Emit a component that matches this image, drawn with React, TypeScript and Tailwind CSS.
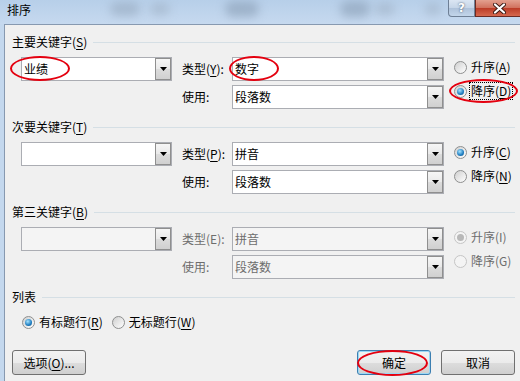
import type { ReactNode } from 'react';

const FONT = "font-['Noto_Sans_CJK_SC','Noto_Sans',sans-serif]";

function Key({ k, line = true }: { k: string; line?: boolean }): ReactNode {
  return (
    <>
      (<span className={line ? 'underline underline-offset-[2px] decoration-1' : ''}>{k}</span>)
    </>
  );
}

function Header({ children }: { children: ReactNode }): ReactNode {
  return (
    <div className="flex h-[16px] items-center">
      <span className="leading-[16px]">{children}</span>
      <div className="ml-[6px] h-px flex-1 bg-[#d5dfe5]" />
    </div>
  );
}

function Combo({ value, w, disabled }: { value: string; w: string; disabled?: boolean }): ReactNode {
  return (
    <div
      className={`flex h-[24px] ${w} border border-[#abadb3] ${
        disabled ? 'bg-[#f4f4f4] text-[#6d6d6d]' : 'bg-white text-black'
      }`}
    >
      <div className="flex-1 pl-[2px] leading-[22px]">{value}</div>
      <div className="flex w-[16px] items-center justify-center border border-[#8f8f8f] bg-[linear-gradient(180deg,#f6f6f6_0%,#e9e9e9_50%,#dcdcdc_51%,#d0d0d0_100%)]">
        <svg width="7" height="4" viewBox="0 0 7 4">
          <path d="M0 0h7L3.5 4z" fill="#000" />
        </svg>
      </div>
    </div>
  );
}

function Radio({
  checked,
  disabled,
  focus,
  children,
}: {
  checked?: boolean;
  disabled?: boolean;
  focus?: boolean;
  children: ReactNode;
}): ReactNode {
  return (
    <div className="flex h-[14px] items-center gap-[3px]">
      <span
        className={`flex h-[13px] w-[13px] items-center justify-center rounded-full border ${
          disabled
            ? 'border-[#c5c5c5] bg-[#f4f4f4]'
            : 'border-[#8e8f8f] bg-[linear-gradient(135deg,#cfcfcf,#ffffff)]'
        }`}
      >
        {checked && (
          <span
            className={`h-[7px] w-[7px] rounded-full ${
              disabled
                ? 'bg-[#b8b8b8]'
                : 'bg-[radial-gradient(circle_at_40%_35%,#a6e4ff,#1d7cc0_60%,#0b4f82)]'
            }`}
          />
        )}
      </span>
      <span
        className={`px-[1px] leading-[16px] ${disabled ? 'text-[#6d6d6d]' : ''} ${
          focus ? 'outline-1 outline-dotted outline-black' : ''
        }`}
      >
        {children}
      </span>
    </div>
  );
}

function KeySection({
  title,
  first,
  typeLabel,
  typeValue,
  up,
  down,
  upChecked,
  disabled,
  focusDown,
}: {
  title: ReactNode;
  first: string;
  typeLabel: ReactNode;
  typeValue: string;
  up: ReactNode;
  down: ReactNode;
  upChecked: boolean;
  disabled?: boolean;
  focusDown?: boolean;
}): ReactNode {
  const lbl = `w-[50px] leading-[24px] ${disabled ? 'text-[#6d6d6d]' : ''}`;
  return (
    <>
      <Header>{title}</Header>
      <div className="mt-[7px] flex pl-[9px]">
        <Combo w="w-[151px]" value={first} disabled={disabled} />
        <div className="ml-[10px] flex flex-col gap-[4px]">
          <div className="flex">
            <span className={lbl}>{typeLabel}</span>
            <Combo w="w-[212px]" value={typeValue} disabled={disabled} />
          </div>
          <div className="flex">
            <span className={lbl}>使用:</span>
            <Combo w="w-[212px]" value="段落数" disabled={disabled} />
          </div>
        </div>
        <div className="ml-[10px] mt-[3px] flex flex-col gap-[10px]">
          <Radio checked={upChecked} disabled={disabled}>
            {up}
          </Radio>
          <Radio checked={!upChecked} disabled={disabled} focus={focusDown}>
            {down}
          </Radio>
        </div>
      </div>
    </>
  );
}

const BTN =
  'h-[25px] w-[74px] rounded-[3px] border text-[12px] text-black bg-[linear-gradient(180deg,#f2f2f2_0%,#ebebeb_50%,#dddddd_51%,#cfcfcf_100%)]';

export default function App(): ReactNode {
  return (
    <div className={`relative flex h-[381px] w-[520px] flex-col overflow-hidden bg-[#c4d8ee] text-[12px] text-black ${FONT}`}>
      {/* title bar */}
      <div className="relative h-[24px] overflow-hidden bg-[linear-gradient(180deg,#b7cfe9_0%,#c6d9ef_100%)]">
        <div className="absolute left-[110px] top-[2px] h-[14px] w-[30px] rounded-full bg-[#8fa1b6] opacity-50 blur-[5px]" />
        <div className="absolute left-[150px] top-[3px] h-[12px] w-[20px] rounded-full bg-[#9aabbe] opacity-50 blur-[5px]" />
        <div className="absolute left-[225px] top-[1px] h-[16px] w-[34px] rounded-full bg-[#7f93aa] opacity-50 blur-[5px]" />
        <div className="absolute left-[340px] top-[1px] h-[16px] w-[30px] rounded-full bg-[#7f93aa] opacity-50 blur-[5px]" />
        <div className="absolute left-[375px] top-[3px] h-[12px] w-[20px] rounded-full bg-[#9aabbe] opacity-50 blur-[5px]" />
        <div className="absolute left-[425px] top-[3px] h-[12px] w-[16px] rounded-full bg-[#9aabbe] opacity-50 blur-[5px]" />
        <span className="absolute left-[7px] top-[2px] leading-[16px]">排序</span>
        <div className="absolute left-[448px] top-0 flex h-[17px] w-[27px] items-center justify-center rounded-bl-[4px] border border-t-0 border-[#6e7f95] bg-[linear-gradient(180deg,#dbe6f3_0%,#c5d5e8_50%,#aec2da_51%,#c2d5ea_100%)]">
          <span className="font-['DejaVu_Sans',sans-serif] text-[12px] font-bold leading-[14px] text-white [text-shadow:0_0_2px_#2c3e55]">
            ?
          </span>
        </div>
        <div className="absolute left-[475px] top-0 flex h-[17px] w-[48px] items-center justify-center border border-t-0 border-[#6b2a22] bg-[linear-gradient(180deg,#e3a08f_0%,#d0705c_50%,#bb3b26_51%,#d5684e_100%)]">
          <svg width="13" height="11" viewBox="0 0 13 11">
            <path d="M2 1.5l9 8M11 1.5l-9 8" stroke="#3a1a14" strokeWidth="4" strokeLinecap="round" />
            <path d="M2 1.5l9 8M11 1.5l-9 8" stroke="#fff" strokeWidth="2.2" strokeLinecap="round" />
          </svg>
        </div>
      </div>

      {/* client */}
      <div className="ml-[4px] flex flex-1 flex-col border-l border-t border-[#8799b0] bg-[#f0f0f0] pl-[7px] pr-[5px]">
        <div className="mt-[9px]" />
        <KeySection
          title={<>主要关键字<Key k="S" /></>}
          first="业绩"
          typeLabel={<>类型<Key k="Y" />:</>}
          typeValue="数字"
          up={<>升序<Key k="A" /></>}
          down={<>降序<Key k="D" /></>}
          upChecked={false}
          focusDown
        />
        <div className="mt-[10px]" />
        <KeySection
          title={<>次要关键字<Key k="T" /></>}
          first=""
          typeLabel={<>类型<Key k="P" />:</>}
          typeValue="拼音"
          up={<>升序<Key k="C" /></>}
          down={<>降序<Key k="N" /></>}
          upChecked
        />
        <div className="mt-[10px]" />
        <KeySection
          title={<>第三关键字<Key k="B" /></>}
          first=""
          typeLabel={<>类型<Key k="E" line={false} />:</>}
          typeValue="拼音"
          up={<>升序<Key k="I" line={false} /></>}
          down={<>降序<Key k="G" line={false} /></>}
          upChecked
          disabled
        />
        <div className="mt-[10px]">
          <Header>列表</Header>
        </div>
        <div className="mt-[10px] flex gap-[8px] pl-[10px]">
          <Radio checked>
            有标题行<Key k="R" />
          </Radio>
          <Radio>
            无标题行<Key k="W" />
          </Radio>
        </div>
        <div className="mt-[21px] flex">
          <button className={`${BTN} border-[#707070]`}>
            选项<Key k="O" />...
          </button>
          <div className="flex-1" />
          <button className={`${BTN} border-[#3c7fb1] shadow-[inset_0_0_0_1px_#9ad8f5]`}>确定</button>
          <button className={`${BTN} ml-[10px] border-[#707070]`}>取消</button>
        </div>
      </div>

      {/* red annotation ellipses */}
      <div className="absolute left-[10px] top-[56px] h-[25px] w-[60px] rounded-[50%] border-2 border-[#e4000f]" />
      <div className="absolute left-[229px] top-[56px] h-[25px] w-[50px] rounded-[50%] border-2 border-[#e4000f]" />
      <div className="absolute left-[449px] top-[79px] h-[24px] w-[69px] rounded-[50%] border-2 border-[#e4000f]" />
      <div className="absolute left-[357px] top-[350px] h-[26px] w-[71px] rounded-[50%] border-2 border-[#e4000f]" />
    </div>
  );
}
